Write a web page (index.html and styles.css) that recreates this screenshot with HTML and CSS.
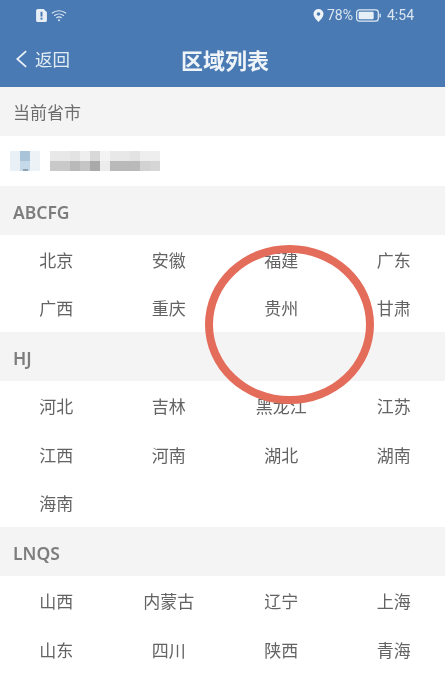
FILE: index.html
```html
<!DOCTYPE html>
<html lang="zh">
<head>
<meta charset="utf-8">
<title>区域列表</title>
<link rel="stylesheet" href="styles.css">
</head>
<body>
<div class="page">
  <header class="header">
    <div class="status">
      <div class="status-left">
        <svg class="ic-alert" viewBox="0 0 10 12"><path d="M1.500 0H7l3 3v7.500A1.500 1.500 0 0 1 8.500 12h-7A1.500 1.500 0 0 1 0 10.500v-9A1.500 1.500 0 0 1 1.500 0z" fill="#e6eef6"/><rect x="4.100" y="2.600" width="1.800" height="4.400" fill="#4a7ab3"/><rect x="4.100" y="8" width="1.800" height="1.800" fill="#4a7ab3"/></svg>
        <svg class="ic-wifi" viewBox="0 0 16 12" fill="none" stroke="#dfe9f3" stroke-width="1.200"><path d="M1 3.800C5 .4 11 .4 15 3.800"/><path d="M3.200 6.200c2.800-2.300 6.800-2.300 9.600 0"/><path d="M5.400 8.500c1.500-1.200 3.700-1.200 5.200 0"/><circle cx="8" cy="10.800" r="1" fill="#dfe9f3" stroke="none"/></svg>
      </div>
      <div class="status-right">
        <svg class="ic-pin" viewBox="0 0 10 13"><path fill-rule="evenodd" d="M5 0a5 5 0 0 1 5 5c0 3-3.200 6-5 8C3.200 11 0 8 0 5a5 5 0 0 1 5-5zm0 3.200a1.800 1.800 0 1 0 0 3.600 1.800 1.800 0 0 0 0-3.600z" fill="#eef3f8"/></svg>
        <span class="pct">78%</span>
        <svg class="ic-batt" viewBox="0 0 24 12"><rect x=".6" y=".6" width="20.800" height="10.800" rx="2.500" fill="none" stroke="#dfe9f3" stroke-width="1.200"/><rect x="2.500" y="2.500" width="14.500" height="7" rx="1" fill="#e6eef6"/><rect x="22.500" y="4" width="1.300" height="4" rx=".6" fill="#dfe9f3"/></svg>
        <span class="time">4:54</span>
      </div>
    </div>
    <div class="nav">
      <div class="back">
        <svg class="ic-back" viewBox="0 0 14 20" fill="none" stroke="#eaf1f7" stroke-width="1.900"><path d="M12 1.500 2.500 10l9.500 8.500"/></svg>
        <span>返回</span>
      </div>
      <h1 class="title">区域列表</h1>
    </div>
  </header>

  <div class="section-head">当前省市</div>
  <div class="current">
    <div class="mosaic-icon"><i class="mi a"></i><i class="mi b"></i><i class="mi c"></i></div>
    <div class="mosaic-text">
      <i class="t1"></i><i class="t1"></i><i class="t2"></i><i class="t3"></i><i class="t4"></i><i class="t5"></i><i class="t1"></i><i class="t1"></i><i class="t2"></i><i class="t3"></i><i class="t3"></i>
      <i class="b1"></i><i class="b1"></i><i class="b2"></i><i class="b3"></i><i class="b4"></i><i class="b5"></i><i class="b2"></i><i class="b2"></i><i class="b2"></i><i class="b6"></i><i class="b7"></i>
    </div>
  </div>

  <div class="section-head group">ABCFG</div>
  <div class="cities">
    <span>北京</span><span>安徽</span><span>福建</span><span>广东</span>
    <span>广西</span><span>重庆</span><span>贵州</span><span>甘肃</span>
  </div>

  <div class="section-head group">HJ</div>
  <div class="cities">
    <span>河北</span><span>吉林</span><span>黑龙江</span><span>江苏</span>
    <span>江西</span><span>河南</span><span>湖北</span><span>湖南</span>
    <span>海南</span>
  </div>

  <div class="section-head group">LNQS</div>
  <div class="cities">
    <span>山西</span><span>内蒙古</span><span>辽宁</span><span>上海</span>
    <span>山东</span><span>四川</span><span>陕西</span><span>青海</span>
  </div>

  <div class="ring"></div>
</div>
</body>
</html>
```
FILE: styles.css
```css
* { box-sizing: border-box; }
html, body { margin: 0; padding: 0; }
body { width: 445px; height: 690px; overflow: hidden; background: #fff; font-family: "Noto Sans CJK SC", "Noto Sans", sans-serif; }
.page { position: relative; width: 445px; height: 690px; overflow: hidden; filter: blur(0.45px); }

.header { height: 87px; background: #4a7ab3; color: #e8f0f6; }
.status { display: flex; justify-content: space-between; align-items: center; height: 30px; padding: 0 31px 0 36px; }
.status-left, .status-right { display: flex; align-items: center; }
.status-right { gap: 3px; }
.ic-alert { width: 11px; height: 13px; margin-right: 4px; }
.ic-wifi { width: 16px; height: 13px; }
.ic-pin { width: 11px; height: 13px; }
.pct, .time { font-family: "Roboto", sans-serif; font-size: 14px; color: #dbe6f0; line-height: 16px; }
.ic-batt { width: 25px; height: 13px; margin-right: 3px; }

.nav { position: relative; display: flex; align-items: center; justify-content: center; height: 57px; padding-left: 5px; }
.back { position: absolute; left: 15px; top: 0; height: 57px; display: flex; align-items: center; gap: 7px; font-size: 17.500px; color: #e3ecf4; }
.ic-back { width: 13px; height: 20px; }
.title { margin: 0; font-size: 22px; font-weight: 700; color: #eef4f8; line-height: 30px; }

.section-head { height: 49px; background: #f4f4f4; padding-left: 13px; display: flex; align-items: center; font-size: 17px; color: #6d6d6d; }
.group { font-family: "Noto Sans", sans-serif; font-size: 17.500px; font-weight: 600; color: #7d7d7d; padding-top: 2px; }

.current { position: relative; height: 50px; background: #fff; display: flex; align-items: center; padding-left: 10px; gap: 10px; }
.current::after { content: ""; position: absolute; left: 23px; top: 33px; width: 5px; height: 2px; background: #8fa3b5; }
.mosaic-icon { width: 30px; height: 20px; margin-top: -1px; display: grid; grid-template-columns: 10px 10px 10px; background: #edf2f7; }
.mi { display: block; }
.mi.a { background: #e9f0f6; }
.mi.b { background: linear-gradient(#a9c3d8 50%, #c6d9e8 50%); }
.mi.c { background: #edf2f7; }
.mosaic-text { width: 110px; height: 20px; margin-top: -1px; display: grid; grid-template-columns: repeat(11, 10px); grid-template-rows: 10px 10px; }
.mosaic-text i { display: block; }
.t1 { background: #e8e8e8; }
.t2 { background: #e3e3e3; }
.t3 { background: #eeeeee; }
.t4 { background: #d8d8d8; }
.t5 { background: #f3f3f3; }
.b1 { background: #c9c9c9; }
.b2 { background: #b9b9b9; }
.b3 { background: #c5c5c5; }
.b4 { background: #a9a9a9; }
.b5 { background: #ececec; }
.b6 { background: #d2d2d2; }
.b7 { background: #d6d6d6; }

.cities { width: 450px; display: grid; grid-template-columns: repeat(4, 112.500px); grid-auto-rows: 48.670px; background: #fff; }
.cities span { display: flex; align-items: center; justify-content: center; font-size: 17px; color: #636363; }

.ring { position: absolute; left: 205px; top: 244.500px; width: 169px; height: 159.500px; border: 8px solid #e46c5a; border-radius: 50%; }
```
